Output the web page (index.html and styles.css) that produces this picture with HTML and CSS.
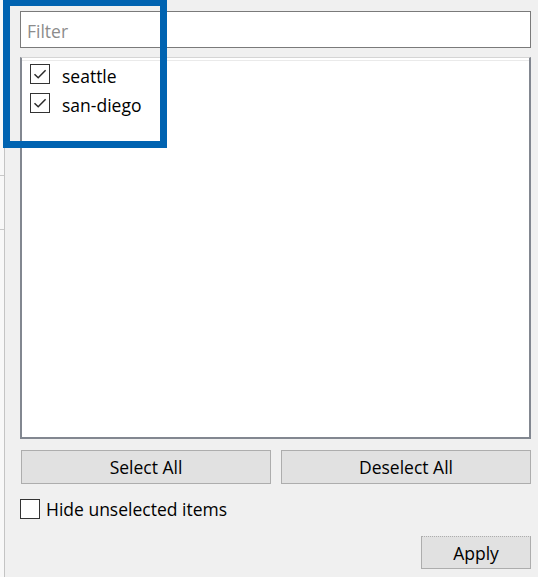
FILE: index.html
```html
<!DOCTYPE html>
<html>
<head>
<meta charset="utf-8">
<link rel="stylesheet" href="styles.css">
</head>
<body>
<div class="window">
  <div class="side-strip">
    <span class="tick tick-a"></span>
    <span class="tick tick-b"></span>
  </div>
  <div class="panel">
    <div class="filter">Filter</div>
    <div class="list">
      <div class="item">
        <span class="box checked">
          <svg viewBox="0 0 20 20" width="20" height="20"><path d="M4.5 10.2 L8.2 13.8 L15.6 6.2" fill="none" stroke="#2b2b2b" stroke-width="1.5"/></svg>
        </span>
        <span class="label">seattle</span>
      </div>
      <div class="item">
        <span class="box checked">
          <svg viewBox="0 0 20 20" width="20" height="20"><path d="M4.5 10.2 L8.2 13.8 L15.6 6.2" fill="none" stroke="#2b2b2b" stroke-width="1.5"/></svg>
        </span>
        <span class="label">san-diego</span>
      </div>
    </div>
    <div class="btn-row">
      <div class="btn">Select All</div>
      <div class="btn">Deselect All</div>
    </div>
    <div class="hide-row">
      <span class="box"></span>
      <span class="label">Hide unselected items</span>
    </div>
    <div class="apply-row">
      <div class="btn apply">Apply</div>
    </div>
  </div>
  <div class="highlight"></div>
</div>
</body>
</html>
```
FILE: styles.css
```css
*, *::before, *::after {
  box-sizing: border-box;
}
html, body {
  margin: 0;
  padding: 0;
  background: #f0f0f0;
  font-family: "Open Sans", "Noto Sans", "Liberation Sans", sans-serif;
  color: #000;
}
.window {
  position: relative;
  display: flex;
  width: 538px;
  height: 577px;
  overflow: hidden;
}
.side-strip {
  position: relative;
  width: 5px;
  flex: none;
  background: #f8f8f8;
  border-right: 1px solid #c4c4c4;
}
.tick {
  position: absolute;
  left: 0;
  width: 4px;
  height: 1px;
  background: #c8c8c8;
}
.tick-a { top: 175px; }
.tick-b { top: 229px; }
.panel {
  flex: 1;
  display: flex;
  flex-direction: column;
  padding: 11px 7px 0 15px;
}
.filter {
  height: 37px;
  border: 1px solid #7a7a7a;
  background: #fff;
  color: #8c8c8c;
  font-size: 17.5px;
  line-height: 37px;
  padding: 1px 0 0 6px;
}
.list {
  margin-top: 9px;
  height: 382px;
  border: 1px solid #828790;
  border-width: 1px 2px 2px 2px;
  border-top-color: #d5d5d5;
  background: #fff;
  box-shadow: inset 0 2px 0 #fff, inset 0 3px 0 #eaeaea;
  padding: 6px 0 0 8px;
  display: flex;
  flex-direction: column;
  gap: 9px;
}
.item {
  display: flex;
  align-items: center;
  height: 20px;
}
.box {
  width: 20px;
  height: 20px;
  border: 1px solid #333;
  background: #fff;
  flex: none;
  display: block;
  position: relative;
}
.box svg {
  position: absolute;
  left: -1px;
  top: -1px;
}
.label {
  font-size: 17.5px;
  margin-left: 12px;
  line-height: 20px;
  padding-top: 3px;
}
.btn-row {
  display: flex;
  gap: 10px;
  margin-top: 11px;
  padding-left: 1px;
}
.btn {
  flex: 1;
  height: 34px;
  border: 1px solid #adadad;
  background: #e1e1e1;
  font-size: 17.5px;
  line-height: 32px;
  text-align: center;
}
.hide-row {
  display: flex;
  align-items: center;
  margin-top: 15px;
}
.hide-row .label {
  margin-left: 6px;
  padding-top: 0;
}
.apply-row {
  display: flex;
  justify-content: flex-end;
  margin-top: 17px;
}
.btn.apply {
  flex: none;
  width: 110px;
  height: 33px;
  line-height: 33px;
  border-top-style: dotted;
}
.highlight {
  position: absolute;
  left: 3px;
  top: -1px;
  width: 164px;
  height: 149px;
  border: 7px solid #0063b1;
}
```
